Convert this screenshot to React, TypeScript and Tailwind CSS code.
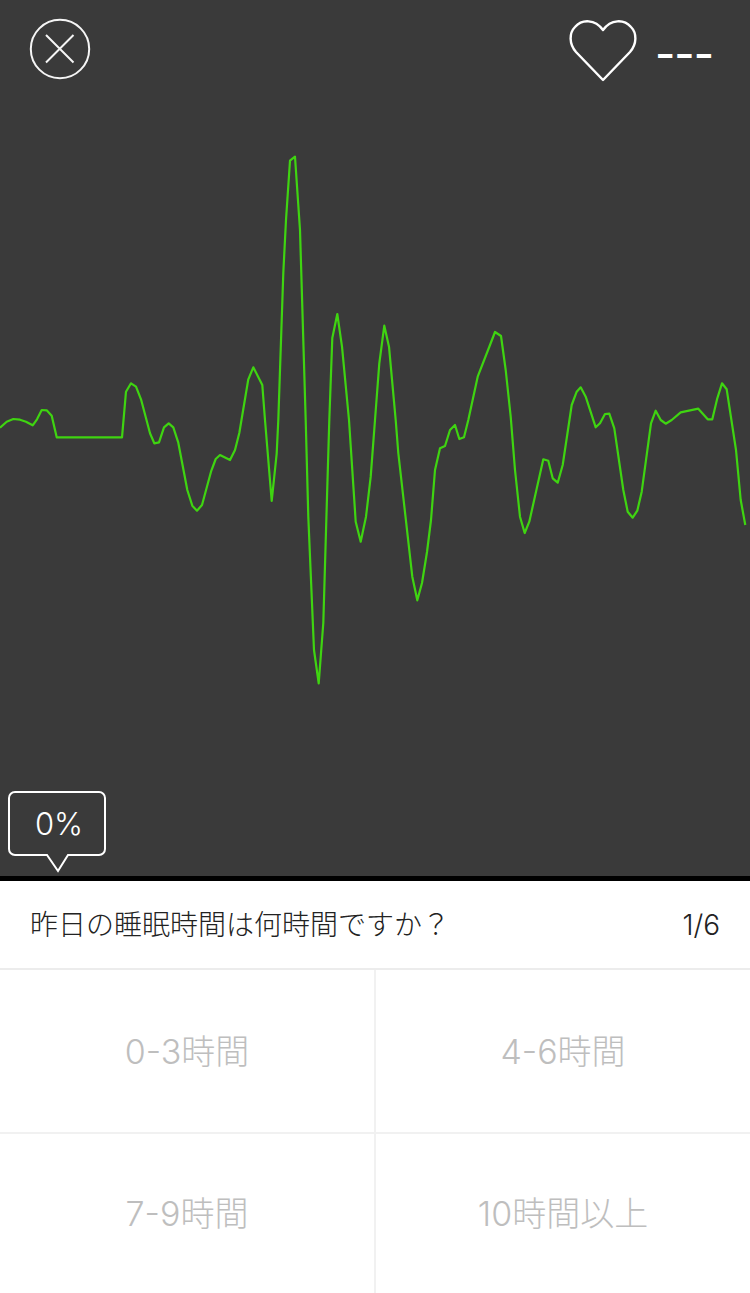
const wave =
  "0,427.7 6.7,421.7 13.3,419 20,419.7 26,421.7 32.7,425.3 37,419.3 41.7,410 46.7,410.3 51.7,415.7 56.7,437.3 122,437.3 126,391.7 131,383.3 136,386.7 141,399.3 150,433.3 154.3,443.3 159,442.3 164,427.3 168.7,423.3 173.3,427.3 178.3,442.7 187.3,490 192.3,505.7 197,510.7 202,505 211,471.7 215.7,459 220,455 230,460 235,450 239.3,433 248.3,379.3 253.3,367.3 262.3,385 265,420 271.7,501 276.7,453.3 278.3,420 283.3,273 286,220 290,160.7 295,156.7 300,230 305.7,420 308.3,516.7 314,650 318.7,683.3 323.3,623 327.3,486.7 329.3,420 332.3,338 337.3,314 342,346.7 349,420 355.7,521.7 360.7,541.7 366,516.7 370.7,476.7 375,420 379.3,363.3 384.3,325.7 389,346.7 395.7,420 398.3,453 412.3,576.7 417.3,600.3 422,583 427,552 431,520 435,470 440,448.3 445,446 450,430 455,425 459.3,439 464,437.3 468.3,420 477.7,376.7 490,345 495,332 501,336 505.7,370 510.7,416.7 515,470 520,516.7 524.7,533 529.3,521.7 543.3,459.3 548.3,460.7 552.7,478.3 557.7,482.7 562.7,465 571.7,405 576.7,391.7 580.7,387.3 585.7,396.7 595.7,427.3 600,423.3 605,414 609.3,413.7 614.3,428.3 623.3,490 627.7,511.7 632.7,517.7 637.3,510.7 641.7,491.7 651,423.3 655.7,410.7 660.7,420 665.7,423.7 671.7,420 680.7,412.3 698.3,408.7 707.7,419.3 712.3,419.3 717.3,398.3 722,383.3 726.7,389.3 736,450 740.7,500 745.3,525";

const font = "font-['Inter','Noto_Sans_CJK_JP',sans-serif]";

const options = ["0-3時間", "4-6時間", "7-9時間", "10時間以上"];

export default function App() {
  return (
    <div className={`flex h-[1293px] w-[750px] flex-col overflow-hidden bg-white ${font}`}>
      <section className="relative h-[876px] bg-[#3a3a3a]">
        <svg className="absolute inset-0" width="750" height="876" viewBox="0 0 750 876" fill="none">
          <polyline points={wave} stroke="#3fd411" strokeWidth="2.2" strokeLinejoin="round" />
        </svg>

        <header className="relative flex items-start justify-between pl-[29px] pr-[37px] pt-[18px]">
          <svg width="62" height="62" viewBox="0 0 62 62" fill="none" stroke="#f5f5f5">
            <circle cx="31" cy="31" r="29.2" strokeWidth="2" />
            <path d="M17 17 L44.5 44.5 M44.5 17 L17 44.5" strokeWidth="2" />
          </svg>
          <div className="flex items-start">
            <svg className="mt-[1px]" width="68" height="64" viewBox="0 0 68 64" fill="none">
              <path
                d="M34 61 L7 33 C0 25 0 14 6 8 C13 0 26 0 34 11 C42 0 55 0 62 8 C68 14 68 25 61 33 Z"
                stroke="#fff"
                strokeWidth="2.4"
                strokeLinejoin="round"
              />
            </svg>
            <span className="ml-[18px] text-[44px] font-medium leading-[73px] tracking-[-1px] text-white">---</span>
          </div>
        </header>

        <div className="absolute left-[8px] top-[791px]">
          <svg width="98" height="82" viewBox="0 0 98 82" fill="none">
            <path
              d="M7 1 H91 A6 6 0 0 1 97 7 V58 A6 6 0 0 1 91 64 H60 L50 80 L39 64 H7 A6 6 0 0 1 1 58 V7 A6 6 0 0 1 7 1 Z"
              stroke="#fff"
              strokeWidth="2"
            />
          </svg>
          <span className="absolute left-[2px] top-[1px] flex h-[65px] w-[98px] items-center justify-center text-[31px] font-light text-white">
            0%
          </span>
        </div>
      </section>

      <div className="h-[5px] bg-black" />

      <div className="flex h-[89px] items-center justify-between border-b-2 border-[#ececec] pl-[30px] pr-[30px] pt-[1px] text-[28px] font-light leading-none text-[#222]">
        <span>昨日の睡眠時間は何時間ですか？</span>
        <span>1/6</span>
      </div>

      <div className="grid flex-1 grid-cols-[374px_376px] grid-rows-[162px_161px]">
        {options.map((label, i) => (
          <div
            key={label}
            className={`flex items-center justify-center text-[34px] font-light text-[#bebebe] ${
              i % 2 === 1 ? "border-l-2 border-[#f1f1f1]" : ""
            } ${i < 2 ? "pt-[1px]" : "border-t-2 border-[#f1f1f1]"}`}
          >
            {label}
          </div>
        ))}
      </div>
    </div>
  );
}
